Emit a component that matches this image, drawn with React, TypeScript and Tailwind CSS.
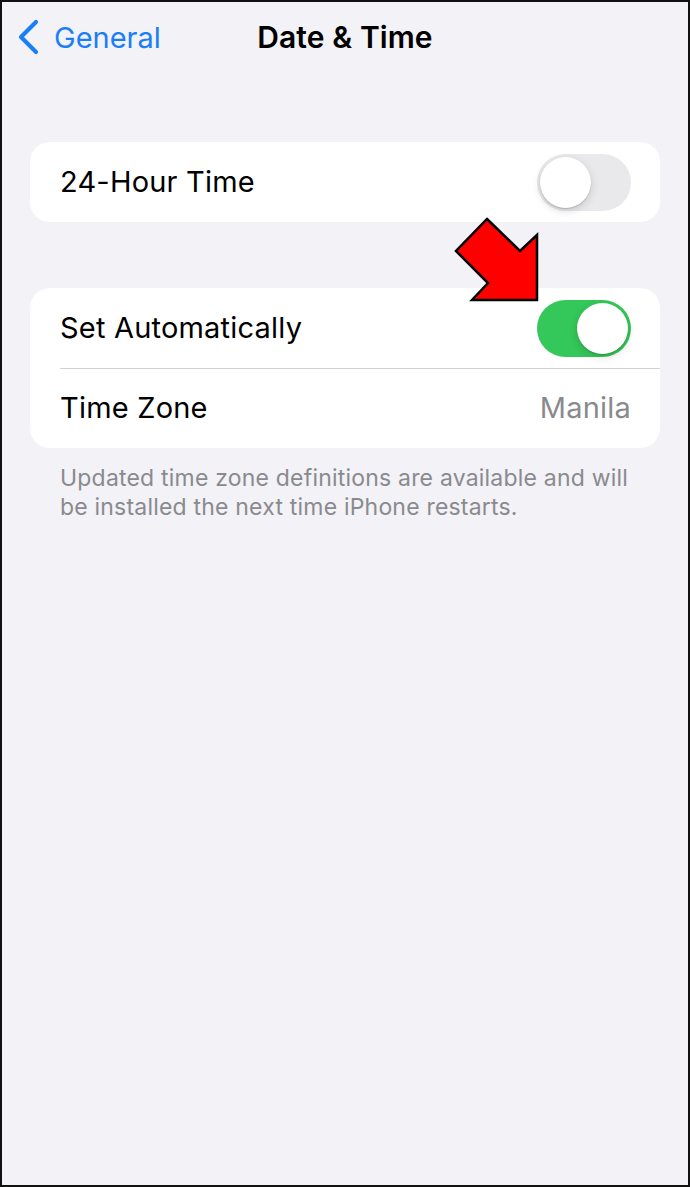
import React from "react";

const font = { fontFamily: "Inter, 'Noto Sans', sans-serif" };

/** iOS style switch */
function Toggle({ on }: { on: boolean }) {
  return (
    <div
      className={`flex h-[57px] w-[94px] items-center rounded-full p-[3px] ${
        on ? "justify-end bg-[#34c759]" : "justify-start bg-[#e9e9eb]"
      }`}
    >
      <div className="h-[51px] w-[51px] rounded-full bg-white shadow-[0_3px_8px_rgba(0,0,0,0.15),0_1px_1px_rgba(0,0,0,0.16)]" />
    </div>
  );
}

function Row({ children }: { children: React.ReactNode }) {
  return <div className="flex h-[80px] items-center justify-between pl-[30px] pr-[29px]">{children}</div>;
}

export default function App() {
  return (
    <div
      className="relative box-border h-[1187px] w-[690px] overflow-hidden border-2 border-[#111] bg-[#f2f2f7]"
      style={font}
    >
      {/* Nav bar */}
      <div className="grid h-[70px] grid-cols-[1fr_auto_1fr] items-center">
        <div className="flex items-center gap-[14px] pl-[14px] text-[#1a7ef7]">
          <svg width="24" height="36" viewBox="0 0 24 36" fill="none">
            <path d="M20 3 L5 18 L20 33" stroke="currentColor" strokeWidth="4.2" strokeLinecap="round" strokeLinejoin="round" />
          </svg>
          <span className="text-[29px] leading-none tracking-[0px]">General</span>
        </div>
        <div className="text-[30px] font-semibold leading-none tracking-[0.1px] text-black">Date &amp; Time</div>
        <div />
      </div>

      {/* 24-hour */}
      <div className="mx-[28px] mt-[70px] overflow-hidden rounded-[20px] bg-white">
        <Row>
          <span className="text-[29px] tracking-[0.2px] text-black">24-Hour Time</span>
          <Toggle on={false} />
        </Row>
      </div>

      {/* Automatic / zone */}
      <div className="mx-[28px] mt-[66px] overflow-hidden rounded-[20px] bg-white">
        <Row>
          <span className="text-[29px] tracking-[0.2px] text-black">Set Automatically</span>
          <Toggle on={true} />
        </Row>
        <div className="ml-[30px] h-px bg-[#d1d1d6]" />
        <div className="-mt-px">
          <Row>
            <span className="text-[29px] tracking-[0.2px] text-black">Time Zone</span>
            <span className="text-[29px] tracking-[0.2px] text-[#8a8a8e]">Manila</span>
          </Row>
        </div>
      </div>

      <p className="ml-[58px] mr-[43px] mt-[16px] text-[23px] leading-[29px] tracking-[0.2px] text-[#8a8a8e]">
        Updated time zone definitions are available and will be installed the next time iPhone restarts.
      </p>

      {/* Red annotation arrow */}
      <svg className="absolute left-0 top-0" width="690" height="400" viewBox="0 0 690 400">
        <polygon
          points="487,219 520,251 537,235 537,300 472,300 488,283 456,251"
          transform="translate(-2,-2)"
          fill="#ff0000"
          stroke="#000"
          strokeWidth="2.5"
          strokeLinejoin="miter"
        />
      </svg>
    </div>
  );
}
